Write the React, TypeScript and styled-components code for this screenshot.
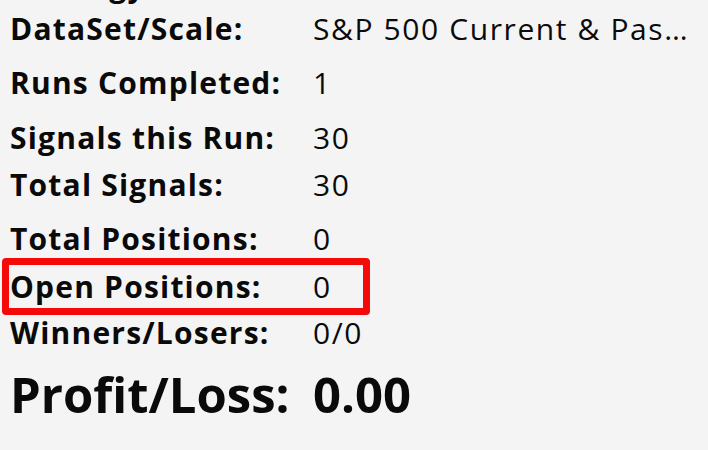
import React from 'react'
import styled, { createGlobalStyle } from 'styled-components'

const GlobalStyle = createGlobalStyle`
  html, body {
    margin: 0;
    padding: 0;
    background: #f4f4f4;
  }
  body {
    width: 708px;
    height: 450px;
    overflow: hidden;
    font-family: 'Open Sans', 'Noto Sans', sans-serif;
    color: #0a0a0a;
  }
`

// the panel is scrolled a little, so the first row is cut off at the top
const Viewport = styled.div`
  width: 708px;
  height: 450px;
  overflow: hidden;
`

const StatsPanel = styled.div`
  display: flex;
  flex-direction: column;
  margin-top: -32px;
  padding-left: 10px;
`

const StatRow = styled.div<{ $space: number; $highlight?: boolean }>`
  position: relative;
  display: grid;
  grid-template-columns: 303px 1fr;
  align-items: baseline;
  height: 36px;
  line-height: 36px;
  margin-top: ${({ $space }) => $space}px;
  font-size: 30px;

  ${({ $highlight }) =>
    $highlight &&
    `
    &::after {
      content: '';
      position: absolute;
      left: -8px;
      top: -11px;
      width: 354px;
      height: 43px;
      border: 7px solid #f50a0a;
      border-radius: 4px;
      pointer-events: none;
    }
  `}
`

const Label = styled.span`
  font-weight: 700;
  letter-spacing: 1.2px;
  white-space: nowrap;
`

const Value = styled.span`
  font-weight: 400;
  letter-spacing: 1.6px;
  white-space: nowrap;
  overflow: hidden;
  text-overflow: ellipsis;
  max-width: 382px;
`

const TotalRow = styled.div`
  display: grid;
  grid-template-columns: 303px 1fr;
  align-items: baseline;
  height: 60px;
  line-height: 60px;
  margin-top: 13px;
  font-size: 49px;
  font-weight: 700;
`

const rows = [
  { label: 'Strategy:', value: '', space: 0 },
  { label: 'DataSet/Scale:', value: 'S&P 500 Current & Past Constituents', space: 7 },
  { label: 'Runs Completed:', value: '1', space: 18 },
  { label: 'Signals this Run:', value: '30', space: 19 },
  { label: 'Total Signals:', value: '30', space: 11 },
  { label: 'Total Positions:', value: '0', space: 18 },
  { label: 'Open Positions:', value: '0', space: 12, highlight: true },
  { label: 'Winners/Losers:', value: '0/0', space: 10 }
]

export default function App() {
  return (
    <Viewport>
      <GlobalStyle />
      <StatsPanel>
        {rows.map(row => (
          <StatRow key={row.label} $space={row.space} $highlight={row.highlight}>
            <Label>{row.label}</Label>
            <Value>{row.value}</Value>
          </StatRow>
        ))}
        <TotalRow>
          <span>Profit/Loss:</span>
          <span>0.00</span>
        </TotalRow>
      </StatsPanel>
    </Viewport>
  )
}
